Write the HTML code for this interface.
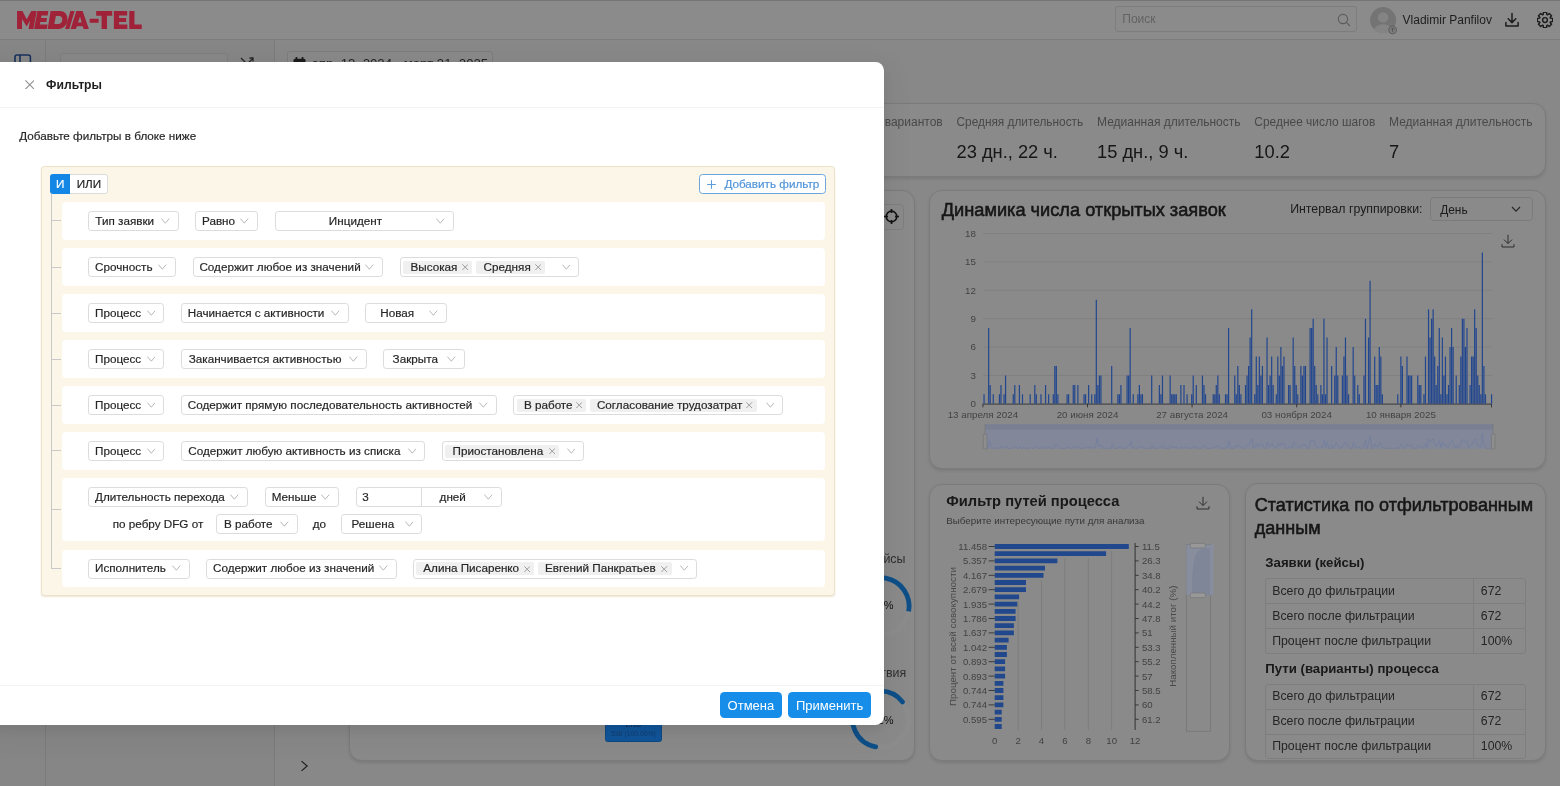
<!DOCTYPE html>
<html lang="ru">
<head>
<meta charset="utf-8">
<title>Фильтры</title>
<style>
*{box-sizing:border-box;margin:0;padding:0}
html,body{width:1560px;height:786px;overflow:hidden}
body{font-family:"Liberation Sans",sans-serif;background:#f8f8f8;color:#222;position:relative}
.abs{position:absolute}
/* ---------- dashboard (behind mask) ---------- */
#dash{will-change:transform;position:absolute;left:0;top:0;width:1560px;height:786px;overflow:hidden}
#topbar{position:absolute;left:0;top:0;width:1560px;height:39.5px;background:#fefefe;border-bottom:1px solid #e2e2e2}
.vline{position:absolute;top:40px;width:1px;height:746px;background:#e0e0e0}
.card{position:absolute;background:#fcfcfc;border-radius:13px;border:1px solid #e0e0e0;box-shadow:0 1.5px 3.5px rgba(0,0,0,.11)}
.lbl{position:absolute;font-size:12.4px;color:#858585;white-space:nowrap}
.val{position:absolute;font-size:18.3px;color:#2b2b2b;white-space:nowrap}
.t{position:absolute;white-space:nowrap}
/* ---------- mask + modal ---------- */
#over{will-change:transform;position:absolute;left:0;top:0;width:1560px;height:786px;overflow:hidden}
#mask{position:absolute;left:0;top:0;width:1560px;height:786px;background:rgba(0,0,0,.45)}
#modal{position:absolute;left:-10px;top:61.7px;width:894.3px;height:663.3px;background:#fff;border-radius:0 8.5px 8.5px 0;box-shadow:0 5px 14px rgba(0,0,0,.08),0 9px 28px 8px rgba(0,0,0,.04)}
#modal .in{will-change:transform;position:absolute;left:10px;top:-61.7px;width:884px;height:724px}
.hr{position:absolute;left:0;width:884px;height:1.4px;background:#f3f3f3}
.mt{position:absolute;white-space:nowrap;font-size:11.7px;color:#262626;line-height:14px;-webkit-text-stroke-width:0.18px}

.sel{position:absolute;background:#fff;border:1px solid #dcdcdc;border-radius:3.2px}
.tag{position:absolute;height:13.1px;background:#f0f0f0;border-radius:2px}
.btn{position:absolute;top:692.2px;height:25.6px;background:#158de9;border-radius:4.5px;color:#fff;font-size:13px;line-height:27px;text-align:center;white-space:nowrap}
</style>
</head>
<body>
<div id="dash">
  <div id="topbar"></div>
  <div class="abs" style="left:0;top:40px;width:274px;height:746px;background:#f5f5f5"></div>
  <div class="vline" style="left:45px"></div>
  <div class="vline" style="left:274px"></div>
<div class="abs" style="left:0;top:0;width:1560px;height:1.2px;background:#d6d6d6"></div>
<div class="abs" style="left:1114.5px;top:6.3px;width:242px;height:25.6px;border:1px solid #e3e3e3;border-radius:3px;background:#fdfdfd"></div>
<div class="t" style="left:1122.3px;top:12.8px;font-size:12px;color:#b5b5b5;line-height:13px">Поиск</div>
<svg class="abs" style="left:1336.5px;top:12.6px" width="14" height="14" viewBox="0 0 14 14"><circle cx="6" cy="6" r="4.6" fill="none" stroke="#a5a5a5" stroke-width="1.1"/><path d="M9.4 9.4 L12.6 12.6" stroke="#a5a5a5" stroke-width="1.2" stroke-linecap="round"/></svg>
<svg class="abs" style="left:1369px;top:5.5px" width="30" height="30" viewBox="0 0 30 30"><defs><clipPath id="avc"><circle cx="14.1" cy="14.1" r="13"/></clipPath></defs><circle cx="14.1" cy="14.1" r="13" fill="#d4d4d4"/><g clip-path="url(#avc)"><circle cx="14.1" cy="11.4" r="5.2" fill="#f1f1f1"/><ellipse cx="14.1" cy="25.5" rx="9.6" ry="7.2" fill="#f1f1f1"/></g><circle cx="23.6" cy="24" r="3.9" fill="#e6e6e6" stroke="#9a9a9a" stroke-width="0.8"/><path d="M23.6 26.2 V22 M21.9 23.6 L23.6 21.9 L25.3 23.6" fill="none" stroke="#8a8a8a" stroke-width="0.8"/></svg>
<div class="t" style="left:1402.6px;top:13.2px;font-size:12px;color:#3a3a3a;line-height:14px">Vladimir Panfilov</div>
<svg class="abs" style="left:1504px;top:11.5px" width="16" height="16" viewBox="0 0 16 16"><path d="M8 1.6 V10.4 M4.2 6.8 L8 10.6 L11.8 6.8 M1.9 10.6 V14.1 H14.1 V10.6" fill="none" stroke="#333" stroke-width="1.5" stroke-linecap="round" stroke-linejoin="round"/></svg>
<svg class="abs" style="left:1537px;top:11.6px" width="16" height="16" viewBox="0 0 16 16"><path d="M15.64 6.45 L15.64 9.55 L13.39 9.85 L13.12 10.51 L14.50 12.31 L12.31 14.50 L10.51 13.12 L9.85 13.39 L9.55 15.64 L6.45 15.64 L6.15 13.39 L5.49 13.12 L3.69 14.50 L1.50 12.31 L2.88 10.51 L2.61 9.85 L0.36 9.55 L0.36 6.45 L2.61 6.15 L2.88 5.49 L1.50 3.69 L3.69 1.50 L5.49 2.88 L6.15 2.61 L6.45 0.36 L9.55 0.36 L9.85 2.61 L10.51 2.88 L12.31 1.50 L14.50 3.69 L13.12 5.49 L13.39 6.15Z" fill="none" stroke="#333" stroke-width="1.45" stroke-linejoin="round"/><circle cx="8" cy="8" r="2.4" fill="none" stroke="#333" stroke-width="1.45"/></svg>
<svg class="abs" style="left:13.5px;top:53.5px" width="19" height="16" viewBox="0 0 19 16"><rect x="1" y="1" width="15.4" height="14" rx="2" fill="none" stroke="#2b5aa8" stroke-width="1.6"/><path d="M6 1 V15" stroke="#2b5aa8" stroke-width="1.6"/></svg>
<div class="abs" style="left:59.5px;top:52.5px;width:168.5px;height:24px;border:1px solid #e6e6e6;border-radius:3px;background:#f8f8f8"></div>
<svg class="abs" style="left:240px;top:57px" width="14" height="10" viewBox="0 0 14 10"><path d="M1 1 L7 7 M13 1.5 L7 7 M9.5 1 H13 V4.5" fill="none" stroke="#444" stroke-width="1.3"/></svg>
<div class="abs" style="left:286.5px;top:51px;width:206.5px;height:26px;border:1px solid #e2e2e2;border-radius:3px;background:#f9f9f9"></div>
<svg class="abs" style="left:292.5px;top:56.5px" width="13" height="13" viewBox="0 0 13 13"><rect x="0.5" y="1.8" width="12" height="10.5" rx="1.5" fill="#333"/><rect x="2.6" y="0" width="1.7" height="3.2" fill="#333"/><rect x="8.7" y="0" width="1.7" height="3.2" fill="#333"/></svg>
<div class="t" style="left:311.5px;top:56.1px;font-size:13.2px;color:#444;line-height:15px">апр. 13, 2024 - март 31, 2025</div>
<svg class="abs" style="left:300px;top:760px" width="9" height="12" viewBox="0 0 9 12"><path d="M1.5 1.2 L7.2 6 L1.5 10.8" fill="none" stroke="#333" stroke-width="1.1"/></svg>
<div class="card" style="left:349px;top:103px;width:1197px;height:73.6px"></div>
<div class="lbl" style="right:617.3px;top:114.8px;font-size:12px">вариантов</div>
<div class="lbl" style="left:956.5px;top:114.8px;font-size:11.85px">Средняя длительность</div>
<div class="val" style="left:956.5px;top:141.4px">23 дн., 22 ч.</div>
<div class="lbl" style="left:1097px;top:114.8px;font-size:12.03px">Медианная длительность</div>
<div class="val" style="left:1097px;top:141.4px">15 дн., 9 ч.</div>
<div class="lbl" style="left:1254.3px;top:114.8px;font-size:11.94px">Среднее число шагов</div>
<div class="val" style="left:1254.3px;top:141.4px">10.2</div>
<div class="lbl" style="left:1389px;top:114.8px;font-size:12.03px">Медианная длительность</div>
<div class="val" style="left:1389px;top:141.4px">7</div>
<div class="card" style="left:349px;top:189.5px;width:565.5px;height:571.5px"></div>
<div class="abs" style="left:878px;top:203.5px;width:26px;height:26px;border:1px solid #e6e6e6;border-radius:4px;background:#fcfcfc"></div>
<svg class="abs" style="left:883.3px;top:207.5px" width="17" height="17" viewBox="0 0 17 17"><circle cx="8.5" cy="8.5" r="5.3" fill="none" stroke="#222" stroke-width="1.7"/><path d="M8.5 1 V5 M8.5 12 V16 M1 8.5 H5 M12 8.5 H16" stroke="#222" stroke-width="1.7"/></svg>
<div class="t" style="left:871px;top:551.5px;font-size:12.4px;color:#555;line-height:15px">кейсы</div>
<div class="t" style="left:853px;top:666px;font-size:12.4px;color:#555;line-height:15px">действия</div>
<svg class="abs" style="left:840px;top:566px" width="80" height="200" viewBox="840 566 80 200"><circle cx="880.5" cy="606.3" r="28.6" fill="none" stroke="#ffffff" stroke-width="4.8"/><circle cx="880.5" cy="719.2" r="28" fill="none" stroke="#ffffff" stroke-width="4.8"/></svg>
<div class="t" style="left:865.3px;top:598px;font-size:11px;color:#1c1c1c;line-height:15px">100%</div>
<div class="t" style="left:871.4px;top:712.6px;font-size:11px;color:#1c1c1c;line-height:15px">72%</div><div class="card" style="left:928.5px;top:189.5px;width:617.5px;height:279px"></div>
<div class="t" style="left:941.8px;top:199.6px;font-size:18.2px;font-weight:400;color:#2a2a2a;line-height:20px;-webkit-text-stroke:0.55px #2a2a2a">Динамика числа открытых заявок</div>
<div class="t" style="left:1290.2px;top:202.4px;font-size:12.34px;color:#333;line-height:14px">Интервал группировки:</div>
<div class="abs" style="left:1430px;top:197.3px;width:102.6px;height:24.2px;border:1px solid #e0e0e0;border-radius:4px;background:#fcfcfc"></div>
<div class="t" style="left:1440.2px;top:202.6px;font-size:11.9px;color:#333;line-height:14px">День</div>
<svg class="abs" style="left:1511px;top:206px" width="10" height="7" viewBox="0 0 10 7"><path d="M1 1 L5 5.2 L9 1" fill="none" stroke="#444" stroke-width="1.1"/></svg>
<svg class="abs" style="left:1501px;top:234px" width="14" height="14" viewBox="0 0 14 14"><path d="M7 0.8 V9.4 M3 5.6 L7 9.6 L11 5.6 M1 10.2 V13 H13 V10.2" fill="none" stroke="#555" stroke-width="1" stroke-linejoin="miter"/></svg>
<svg class="abs" style="left:940px;top:225px" width="600" height="230" viewBox="940 225 600 230"><path d="M982.9 375.4 H1492.2" stroke="#e4e4e4" stroke-width="0.8"/><path d="M982.9 347.0 H1492.2" stroke="#e4e4e4" stroke-width="0.8"/><path d="M982.9 318.7 H1492.2" stroke="#e4e4e4" stroke-width="0.8"/><path d="M982.9 290.3 H1492.2" stroke="#e4e4e4" stroke-width="0.8"/><path d="M982.9 261.9 H1492.2" stroke="#e4e4e4" stroke-width="0.8"/><path d="M982.9 233.5 H1492.2" stroke="#e4e4e4" stroke-width="0.8"/><path d="M982.9 404.1 H1491.6" stroke="#555" stroke-width="0.9"/><path d="M982.9 403.8 v3.6" stroke="#555" stroke-width="0.9"/><path d="M1087.5 403.8 v3.6" stroke="#555" stroke-width="0.9"/><path d="M1192.1 403.8 v3.6" stroke="#555" stroke-width="0.9"/><path d="M1296.7 403.8 v3.6" stroke="#555" stroke-width="0.9"/><path d="M1400.9 403.8 v3.6" stroke="#555" stroke-width="0.9"/><path d="M1491.5 403.8 v3.6" stroke="#555" stroke-width="0.9"/><text x="976" y="407.2" font-size="9.8" fill="#7a7a7a" text-anchor="end" font-family="Liberation Sans">0</text><text x="976" y="378.8" font-size="9.8" fill="#7a7a7a" text-anchor="end" font-family="Liberation Sans">3</text><text x="976" y="350.4" font-size="9.8" fill="#7a7a7a" text-anchor="end" font-family="Liberation Sans">6</text><text x="976" y="322.1" font-size="9.8" fill="#7a7a7a" text-anchor="end" font-family="Liberation Sans">9</text><text x="976" y="293.7" font-size="9.8" fill="#7a7a7a" text-anchor="end" font-family="Liberation Sans">12</text><text x="976" y="265.3" font-size="9.8" fill="#7a7a7a" text-anchor="end" font-family="Liberation Sans">15</text><text x="976" y="236.9" font-size="9.8" fill="#7a7a7a" text-anchor="end" font-family="Liberation Sans">18</text><text x="982.9" y="418.2" font-size="9.8" fill="#7a7a7a" text-anchor="middle" font-family="Liberation Sans">13 апреля 2024</text><text x="1087.5" y="418.2" font-size="9.8" fill="#7a7a7a" text-anchor="middle" font-family="Liberation Sans">20 июня 2024</text><text x="1192.1" y="418.2" font-size="9.8" fill="#7a7a7a" text-anchor="middle" font-family="Liberation Sans">27 августа 2024</text><text x="1296.7" y="418.2" font-size="9.8" fill="#7a7a7a" text-anchor="middle" font-family="Liberation Sans">03 ноября 2024</text><text x="1400.9" y="418.2" font-size="9.8" fill="#7a7a7a" text-anchor="middle" font-family="Liberation Sans">10 января 2025</text></svg>
<div class="card" style="left:929px;top:484px;width:301px;height:277px"></div>
<div class="t" style="left:946.3px;top:492px;font-size:14.7px;font-weight:700;color:#2e2e2e;line-height:18px">Фильтр путей процесса</div>
<div class="t" style="left:946.3px;top:515.4px;font-size:9.8px;color:#666;line-height:12px">Выберите интересующие пути для анализа</div>
<svg class="abs" style="left:1195.6px;top:496px" width="14" height="14" viewBox="0 0 14 14"><path d="M7 0.8 V9.4 M3 5.6 L7 9.6 L11 5.6 M1 10.2 V13 H13 V10.2" fill="none" stroke="#555" stroke-width="1"/></svg>
<svg class="abs" style="left:935px;top:535px" width="290" height="222" viewBox="935 535 290 222"><path d="M1018.1 601.5 V730" stroke="#dcdcdc" stroke-width="0.8"/><path d="M1041.5 579.9 V730" stroke="#dcdcdc" stroke-width="0.8"/><path d="M1064.9 558.3 V730" stroke="#dcdcdc" stroke-width="0.8"/><path d="M1088.3 558.3 V730" stroke="#dcdcdc" stroke-width="0.8"/><path d="M1111.7 551.1 V730" stroke="#dcdcdc" stroke-width="0.8"/><path d="M1135.1 543 V730" stroke="#5a5a5a" stroke-width="1"/><path d="M988.6 546.5 H994.7" stroke="#5a5a5a" stroke-width="0.9"/><path d="M1135.1 546.5 h3.6" stroke="#5a5a5a" stroke-width="0.9"/><text x="987" y="549.9" font-size="9.6" fill="#787878" text-anchor="end" font-family="Liberation Sans">11.458</text><text x="1141.9" y="549.9" font-size="9.6" fill="#787878" font-family="Liberation Sans">11.5</text><path d="M988.6 560.9 H994.7" stroke="#5a5a5a" stroke-width="0.9"/><path d="M1135.1 560.9 h3.6" stroke="#5a5a5a" stroke-width="0.9"/><text x="987" y="564.3" font-size="9.6" fill="#787878" text-anchor="end" font-family="Liberation Sans">5.357</text><text x="1141.9" y="564.3" font-size="9.6" fill="#787878" font-family="Liberation Sans">26.3</text><path d="M988.6 575.3 H994.7" stroke="#5a5a5a" stroke-width="0.9"/><path d="M1135.1 575.3 h3.6" stroke="#5a5a5a" stroke-width="0.9"/><text x="987" y="578.7" font-size="9.6" fill="#787878" text-anchor="end" font-family="Liberation Sans">4.167</text><text x="1141.9" y="578.7" font-size="9.6" fill="#787878" font-family="Liberation Sans">34.8</text><path d="M988.6 589.7 H994.7" stroke="#5a5a5a" stroke-width="0.9"/><path d="M1135.1 589.7 h3.6" stroke="#5a5a5a" stroke-width="0.9"/><text x="987" y="593.1" font-size="9.6" fill="#787878" text-anchor="end" font-family="Liberation Sans">2.679</text><text x="1141.9" y="593.1" font-size="9.6" fill="#787878" font-family="Liberation Sans">40.2</text><path d="M988.6 604.1 H994.7" stroke="#5a5a5a" stroke-width="0.9"/><path d="M1135.1 604.1 h3.6" stroke="#5a5a5a" stroke-width="0.9"/><text x="987" y="607.5" font-size="9.6" fill="#787878" text-anchor="end" font-family="Liberation Sans">1.935</text><text x="1141.9" y="607.5" font-size="9.6" fill="#787878" font-family="Liberation Sans">44.2</text><path d="M988.6 618.5 H994.7" stroke="#5a5a5a" stroke-width="0.9"/><path d="M1135.1 618.5 h3.6" stroke="#5a5a5a" stroke-width="0.9"/><text x="987" y="621.9" font-size="9.6" fill="#787878" text-anchor="end" font-family="Liberation Sans">1.786</text><text x="1141.9" y="621.9" font-size="9.6" fill="#787878" font-family="Liberation Sans">47.8</text><path d="M988.6 632.9 H994.7" stroke="#5a5a5a" stroke-width="0.9"/><path d="M1135.1 632.9 h3.6" stroke="#5a5a5a" stroke-width="0.9"/><text x="987" y="636.3" font-size="9.6" fill="#787878" text-anchor="end" font-family="Liberation Sans">1.637</text><text x="1141.9" y="636.3" font-size="9.6" fill="#787878" font-family="Liberation Sans">51</text><path d="M988.6 647.3 H994.7" stroke="#5a5a5a" stroke-width="0.9"/><path d="M1135.1 647.3 h3.6" stroke="#5a5a5a" stroke-width="0.9"/><text x="987" y="650.7" font-size="9.6" fill="#787878" text-anchor="end" font-family="Liberation Sans">1.042</text><text x="1141.9" y="650.7" font-size="9.6" fill="#787878" font-family="Liberation Sans">53.3</text><path d="M988.6 661.7 H994.7" stroke="#5a5a5a" stroke-width="0.9"/><path d="M1135.1 661.7 h3.6" stroke="#5a5a5a" stroke-width="0.9"/><text x="987" y="665.1" font-size="9.6" fill="#787878" text-anchor="end" font-family="Liberation Sans">0.893</text><text x="1141.9" y="665.1" font-size="9.6" fill="#787878" font-family="Liberation Sans">55.2</text><path d="M988.6 676.1 H994.7" stroke="#5a5a5a" stroke-width="0.9"/><path d="M1135.1 676.1 h3.6" stroke="#5a5a5a" stroke-width="0.9"/><text x="987" y="679.5" font-size="9.6" fill="#787878" text-anchor="end" font-family="Liberation Sans">0.893</text><text x="1141.9" y="679.5" font-size="9.6" fill="#787878" font-family="Liberation Sans">57</text><path d="M988.6 690.5 H994.7" stroke="#5a5a5a" stroke-width="0.9"/><path d="M1135.1 690.5 h3.6" stroke="#5a5a5a" stroke-width="0.9"/><text x="987" y="693.9" font-size="9.6" fill="#787878" text-anchor="end" font-family="Liberation Sans">0.744</text><text x="1141.9" y="693.9" font-size="9.6" fill="#787878" font-family="Liberation Sans">58.5</text><path d="M988.6 704.9 H994.7" stroke="#5a5a5a" stroke-width="0.9"/><path d="M1135.1 704.9 h3.6" stroke="#5a5a5a" stroke-width="0.9"/><text x="987" y="708.3" font-size="9.6" fill="#787878" text-anchor="end" font-family="Liberation Sans">0.744</text><text x="1141.9" y="708.3" font-size="9.6" fill="#787878" font-family="Liberation Sans">60</text><path d="M988.6 719.3 H994.7" stroke="#5a5a5a" stroke-width="0.9"/><path d="M1135.1 719.3 h3.6" stroke="#5a5a5a" stroke-width="0.9"/><text x="987" y="722.7" font-size="9.6" fill="#787878" text-anchor="end" font-family="Liberation Sans">0.595</text><text x="1141.9" y="722.7" font-size="9.6" fill="#787878" font-family="Liberation Sans">61.2</text><text x="994.7" y="744.2" font-size="9.6" fill="#787878" text-anchor="middle" font-family="Liberation Sans">0</text><text x="1018.1" y="744.2" font-size="9.6" fill="#787878" text-anchor="middle" font-family="Liberation Sans">2</text><text x="1041.5" y="744.2" font-size="9.6" fill="#787878" text-anchor="middle" font-family="Liberation Sans">4</text><text x="1064.9" y="744.2" font-size="9.6" fill="#787878" text-anchor="middle" font-family="Liberation Sans">6</text><text x="1088.3" y="744.2" font-size="9.6" fill="#787878" text-anchor="middle" font-family="Liberation Sans">8</text><text x="1111.7" y="744.2" font-size="9.6" fill="#787878" text-anchor="middle" font-family="Liberation Sans">10</text><text x="1135.1" y="744.2" font-size="9.6" fill="#787878" text-anchor="middle" font-family="Liberation Sans">12</text><text transform="translate(956.2 636.6) rotate(-90)" font-size="9.8" fill="#858585" text-anchor="middle" font-family="Liberation Sans">Процент от всей совокупности</text><text transform="translate(1176 636.2) rotate(-90)" font-size="9.75" fill="#858585" text-anchor="middle" font-family="Liberation Sans">Накопленный итог (%)</text><rect x="1186.3" y="544.6" width="24" height="186.6" fill="none" stroke="#d0d0d0" stroke-width="0.7"/></svg>
<div class="card" style="left:1245px;top:483px;width:301.3px;height:278px"></div>
<div class="t" style="left:1254.8px;top:494px;font-size:18px;font-weight:400;color:#2a2a2a;line-height:23px;white-space:normal;width:292px;-webkit-text-stroke:0.55px #2a2a2a">Статистика по отфильтрованным данным</div>
<div class="t" style="left:1265.3px;top:555px;font-size:13.2px;font-weight:700;color:#2e2e2e;line-height:16px">Заявки (кейсы)</div>
<div class="abs" style="left:1265.3px;top:578.4px;width:261px;height:75.2px;border:1px solid #e6e6e6;border-radius:3px;background:#fcfcfc"></div>
<div class="abs" style="left:1473.4px;top:578.4px;width:1px;height:75.2px;background:#e6e6e6"></div>
<div class="t" style="left:1272.2px;top:584.0px;font-size:12.3px;color:#444;line-height:14px">Всего до фильтрации</div>
<div class="t" style="left:1480.8px;top:584.0px;font-size:12.3px;color:#444;line-height:14px">672</div>
<div class="abs" style="left:1265.3px;top:603.4px;width:261px;height:1px;background:#e6e6e6"></div>
<div class="t" style="left:1272.2px;top:609.0px;font-size:12.3px;color:#444;line-height:14px">Всего после фильтрации</div>
<div class="t" style="left:1480.8px;top:609.0px;font-size:12.3px;color:#444;line-height:14px">672</div>
<div class="abs" style="left:1265.3px;top:628.3px;width:261px;height:1px;background:#e6e6e6"></div>
<div class="t" style="left:1272.2px;top:633.9px;font-size:12.3px;color:#444;line-height:14px">Процент после фильтрации</div>
<div class="t" style="left:1480.8px;top:633.9px;font-size:12.3px;color:#444;line-height:14px">100%</div>
<div class="t" style="left:1265.3px;top:660.8px;font-size:13.2px;font-weight:700;color:#2e2e2e;line-height:16px">Пути (варианты) процесса</div>
<div class="abs" style="left:1265.3px;top:683.7px;width:261px;height:75.2px;border:1px solid #e6e6e6;border-radius:3px;background:#fcfcfc"></div>
<div class="abs" style="left:1473.4px;top:683.7px;width:1px;height:75.2px;background:#e6e6e6"></div>
<div class="t" style="left:1272.2px;top:689.3px;font-size:12.3px;color:#444;line-height:14px">Всего до фильтрации</div>
<div class="t" style="left:1480.8px;top:689.3px;font-size:12.3px;color:#444;line-height:14px">672</div>
<div class="abs" style="left:1265.3px;top:708.7px;width:261px;height:1px;background:#e6e6e6"></div>
<div class="t" style="left:1272.2px;top:714.3px;font-size:12.3px;color:#444;line-height:14px">Всего после фильтрации</div>
<div class="t" style="left:1480.8px;top:714.3px;font-size:12.3px;color:#444;line-height:14px">672</div>
<div class="abs" style="left:1265.3px;top:733.6px;width:261px;height:1px;background:#e6e6e6"></div>
<div class="t" style="left:1272.2px;top:739.2px;font-size:12.3px;color:#444;line-height:14px">Процент после фильтрации</div>
<div class="t" style="left:1480.8px;top:739.2px;font-size:12.3px;color:#444;line-height:14px">100%</div>
</div>
<div id="mask"></div>
<div id="over">
<svg class="abs" style="left:17.2px;top:10.8px" width="126" height="18.2" viewBox="0 0 126 18.2"><path d="M0 0H5.4L9.7 8.3L14.2 0H19.7L16.4 18H11.5L13 9.6L9.6 15.6L5 8V18H0ZM20.4 0H31.4L30.6 4.4H24.5L24 6.9H30L29.3 11H23.3L22.8 13.6H30.6L29.8 18H17.1ZM33.6 0H42.5C47.5 0 50.6 3.4 50.4 8.6C50.2 14 46.6 18 41.3 18H30.6ZM38.9 4.9L37.3 13.1H41C43.6 13.1 45.2 11.4 45.3 8.8C45.4 6.4 44.2 4.9 42 4.9ZM53.4 0H57.6L52.3 18H48.1ZM59.3 0H65.6L71.9 18H66.6L65.8 15.2H59.9L58.9 18H53.6ZM61 11.4H64.7L63 5.6ZM72.7 7.7H81.7V11.8H72.7ZM79.2 0H95.2V4.7H90V18H84.6V4.7H79.2ZM96.9 0H110.2V4.4H102.1V6.9H109.2V11H102.1V13.6H110.4V18H96.9ZM112.3 0H117.5V13.4H124.8V18H112.3Z" fill="#9f2239" fill-rule="evenodd"/></svg>
<svg class="abs" style="left:840px;top:566px" width="80" height="200" viewBox="840 566 80 200"><path d="M875.04 634.37 A28.6 28.6 0 1 1 908.64 611.41" fill="none" stroke="#0e4f88" stroke-width="4.8" stroke-linecap="butt"/><path d="M875.64 746.77 A28 28 0 1 1 902.56 701.96" fill="none" stroke="#0e4f88" stroke-width="4.8" stroke-linecap="round"/></svg>
<div class="abs" style="left:605px;top:716px;width:57px;height:26px;background:#10559a;border-radius:2.5px;border:1px solid #0e4880"></div>
<div class="t" style="left:605px;width:57px;top:721px;font-size:7.5px;font-weight:700;color:#12365f;text-align:center;line-height:8px">END</div>
<div class="t" style="left:605px;width:57px;top:730px;font-size:6.8px;color:#123c6e;text-align:center;line-height:8px">538 (100.00%)</div><svg class="abs" style="left:940px;top:225px" width="600" height="230" viewBox="940 225 600 230"><path d="M983.45 403.8v-9.5h1.2v9.5zM988.06 403.8v-75.7h1.2v75.7zM989.60 403.8v-18.9h1.2v18.9zM992.68 403.8v-9.5h1.2v9.5zM998.83 403.8v-9.5h1.2v9.5zM1000.37 403.8v-18.9h1.2v18.9zM1003.44 403.8v-9.5h1.2v9.5zM1004.98 403.8v-28.4h1.2v28.4zM1012.67 403.8v-9.5h1.2v9.5zM1014.21 403.8v-18.9h1.2v18.9zM1018.82 403.8v-18.9h1.2v18.9zM1021.90 403.8v-9.5h1.2v9.5zM1029.59 403.8v-9.5h1.2v9.5zM1034.20 403.8v-18.9h1.2v18.9zM1035.74 403.8v-9.5h1.2v9.5zM1040.36 403.8v-9.5h1.2v9.5zM1044.97 403.8v-18.9h1.2v18.9zM1048.05 403.8v-9.5h1.2v9.5zM1052.66 403.8v-9.5h1.2v9.5zM1054.20 403.8v-37.8h1.2v37.8zM1055.74 403.8v-37.8h1.2v37.8zM1057.27 403.8v-9.5h1.2v9.5zM1066.50 403.8v-9.5h1.2v9.5zM1068.04 403.8v-9.5h1.2v9.5zM1072.65 403.8v-18.9h1.2v18.9zM1074.19 403.8v-18.9h1.2v18.9zM1077.27 403.8v-18.9h1.2v18.9zM1083.42 403.8v-9.5h1.2v9.5zM1084.96 403.8v-9.5h1.2v9.5zM1088.03 403.8v-18.9h1.2v18.9zM1091.11 403.8v-9.5h1.2v9.5zM1094.19 403.8v-9.5h1.2v9.5zM1095.72 403.8v-104.1h1.2v104.1zM1097.26 403.8v-18.9h1.2v18.9zM1098.80 403.8v-28.4h1.2v28.4zM1100.34 403.8v-28.4h1.2v28.4zM1111.10 403.8v-37.8h1.2v37.8zM1117.26 403.8v-9.5h1.2v9.5zM1118.79 403.8v-9.5h1.2v9.5zM1120.33 403.8v-18.9h1.2v18.9zM1126.48 403.8v-28.4h1.2v28.4zM1128.02 403.8v-28.4h1.2v28.4zM1129.56 403.8v-75.7h1.2v75.7zM1132.64 403.8v-9.5h1.2v9.5zM1137.25 403.8v-9.5h1.2v9.5zM1138.79 403.8v-18.9h1.2v18.9zM1140.33 403.8v-9.5h1.2v9.5zM1141.86 403.8v-9.5h1.2v9.5zM1151.09 403.8v-28.4h1.2v28.4zM1158.78 403.8v-18.9h1.2v18.9zM1160.32 403.8v-9.5h1.2v9.5zM1161.86 403.8v-28.4h1.2v28.4zM1169.55 403.8v-28.4h1.2v28.4zM1171.09 403.8v-9.5h1.2v9.5zM1172.62 403.8v-9.5h1.2v9.5zM1174.16 403.8v-9.5h1.2v9.5zM1175.70 403.8v-9.5h1.2v9.5zM1180.31 403.8v-18.9h1.2v18.9zM1183.39 403.8v-18.9h1.2v18.9zM1186.47 403.8v-9.5h1.2v9.5zM1191.08 403.8v-9.5h1.2v9.5zM1192.62 403.8v-28.4h1.2v28.4zM1195.69 403.8v-18.9h1.2v18.9zM1201.85 403.8v-28.4h1.2v28.4zM1203.38 403.8v-18.9h1.2v18.9zM1204.92 403.8v-9.5h1.2v9.5zM1212.61 403.8v-9.5h1.2v9.5zM1214.15 403.8v-9.5h1.2v9.5zM1215.69 403.8v-18.9h1.2v18.9zM1217.23 403.8v-28.4h1.2v28.4zM1218.76 403.8v-9.5h1.2v9.5zM1224.92 403.8v-9.5h1.2v9.5zM1226.45 403.8v-9.5h1.2v9.5zM1227.99 403.8v-75.7h1.2v75.7zM1234.14 403.8v-28.4h1.2v28.4zM1235.68 403.8v-9.5h1.2v9.5zM1237.22 403.8v-37.8h1.2v37.8zM1238.76 403.8v-18.9h1.2v18.9zM1240.30 403.8v-9.5h1.2v9.5zM1244.91 403.8v-18.9h1.2v18.9zM1246.45 403.8v-28.4h1.2v28.4zM1247.99 403.8v-37.8h1.2v37.8zM1249.52 403.8v-66.2h1.2v66.2zM1251.06 403.8v-94.6h1.2v94.6zM1254.14 403.8v-9.5h1.2v9.5zM1255.68 403.8v-47.3h1.2v47.3zM1257.21 403.8v-18.9h1.2v18.9zM1258.75 403.8v-47.3h1.2v47.3zM1260.29 403.8v-28.4h1.2v28.4zM1261.83 403.8v-37.8h1.2v37.8zM1266.44 403.8v-66.2h1.2v66.2zM1267.98 403.8v-18.9h1.2v18.9zM1269.52 403.8v-28.4h1.2v28.4zM1271.06 403.8v-47.3h1.2v47.3zM1272.59 403.8v-18.9h1.2v18.9zM1275.67 403.8v-9.5h1.2v9.5zM1277.21 403.8v-47.3h1.2v47.3zM1278.75 403.8v-28.4h1.2v28.4zM1280.28 403.8v-56.8h1.2v56.8zM1281.82 403.8v-37.8h1.2v37.8zM1283.36 403.8v-47.3h1.2v47.3zM1287.97 403.8v-18.9h1.2v18.9zM1289.51 403.8v-18.9h1.2v18.9zM1292.59 403.8v-66.2h1.2v66.2zM1294.13 403.8v-37.8h1.2v37.8zM1295.66 403.8v-18.9h1.2v18.9zM1297.20 403.8v-9.5h1.2v9.5zM1300.28 403.8v-37.8h1.2v37.8zM1301.82 403.8v-28.4h1.2v28.4zM1303.35 403.8v-37.8h1.2v37.8zM1304.89 403.8v-37.8h1.2v37.8zM1309.51 403.8v-75.7h1.2v75.7zM1311.04 403.8v-75.7h1.2v75.7zM1312.58 403.8v-85.1h1.2v85.1zM1314.12 403.8v-37.8h1.2v37.8zM1315.66 403.8v-18.9h1.2v18.9zM1317.20 403.8v-9.5h1.2v9.5zM1320.27 403.8v-18.9h1.2v18.9zM1321.81 403.8v-9.5h1.2v9.5zM1323.35 403.8v-85.1h1.2v85.1zM1324.89 403.8v-9.5h1.2v9.5zM1326.42 403.8v-66.2h1.2v66.2zM1331.04 403.8v-37.8h1.2v37.8zM1334.11 403.8v-28.4h1.2v28.4zM1335.65 403.8v-56.8h1.2v56.8zM1337.19 403.8v-28.4h1.2v28.4zM1341.80 403.8v-28.4h1.2v28.4zM1343.34 403.8v-47.3h1.2v47.3zM1344.88 403.8v-66.2h1.2v66.2zM1346.42 403.8v-28.4h1.2v28.4zM1347.96 403.8v-9.5h1.2v9.5zM1352.57 403.8v-56.8h1.2v56.8zM1354.11 403.8v-28.4h1.2v28.4zM1357.18 403.8v-18.9h1.2v18.9zM1358.72 403.8v-9.5h1.2v9.5zM1363.34 403.8v-28.4h1.2v28.4zM1364.87 403.8v-85.1h1.2v85.1zM1367.95 403.8v-66.2h1.2v66.2zM1369.49 403.8v-123.0h1.2v123.0zM1374.10 403.8v-47.3h1.2v47.3zM1375.64 403.8v-18.9h1.2v18.9zM1377.18 403.8v-18.9h1.2v18.9zM1378.72 403.8v-56.8h1.2v56.8zM1380.25 403.8v-47.3h1.2v47.3zM1381.79 403.8v-9.5h1.2v9.5zM1397.17 403.8v-9.5h1.2v9.5zM1400.25 403.8v-47.3h1.2v47.3zM1401.79 403.8v-37.8h1.2v37.8zM1406.40 403.8v-47.3h1.2v47.3zM1407.94 403.8v-28.4h1.2v28.4zM1409.48 403.8v-28.4h1.2v28.4zM1411.01 403.8v-28.4h1.2v28.4zM1417.17 403.8v-28.4h1.2v28.4zM1418.70 403.8v-18.9h1.2v18.9zM1420.24 403.8v-18.9h1.2v18.9zM1423.32 403.8v-9.5h1.2v9.5zM1424.86 403.8v-47.3h1.2v47.3zM1427.93 403.8v-94.6h1.2v94.6zM1429.47 403.8v-66.2h1.2v66.2zM1431.01 403.8v-85.1h1.2v85.1zM1432.55 403.8v-94.6h1.2v94.6zM1434.08 403.8v-47.3h1.2v47.3zM1435.62 403.8v-18.9h1.2v18.9zM1437.16 403.8v-37.8h1.2v37.8zM1438.70 403.8v-75.7h1.2v75.7zM1440.24 403.8v-9.5h1.2v9.5zM1441.77 403.8v-66.2h1.2v66.2zM1443.31 403.8v-28.4h1.2v28.4zM1444.85 403.8v-47.3h1.2v47.3zM1446.39 403.8v-9.5h1.2v9.5zM1447.93 403.8v-18.9h1.2v18.9zM1449.46 403.8v-56.8h1.2v56.8zM1451.00 403.8v-75.7h1.2v75.7zM1452.54 403.8v-56.8h1.2v56.8zM1455.62 403.8v-28.4h1.2v28.4zM1458.69 403.8v-18.9h1.2v18.9zM1460.23 403.8v-47.3h1.2v47.3zM1461.77 403.8v-85.1h1.2v85.1zM1463.31 403.8v-85.1h1.2v85.1zM1464.84 403.8v-56.8h1.2v56.8zM1466.38 403.8v-75.7h1.2v75.7zM1469.46 403.8v-18.9h1.2v18.9zM1471.00 403.8v-47.3h1.2v47.3zM1472.53 403.8v-47.3h1.2v47.3zM1474.07 403.8v-94.6h1.2v94.6zM1475.61 403.8v-75.7h1.2v75.7zM1477.15 403.8v-28.4h1.2v28.4zM1478.69 403.8v-18.9h1.2v18.9zM1480.22 403.8v-9.5h1.2v9.5zM1481.76 403.8v-151.4h1.2v151.4zM1483.30 403.8v-37.8h1.2v37.8zM1484.84 403.8v-9.5h1.2v9.5zM1490.99 403.8v-9.5h1.2v9.5z" fill="#23478f"/><rect x="985" y="424.2" width="508" height="24.6" fill="#82889a"/><rect x="985" y="424.2" width="508" height="5.4" fill="#7a8092"/><polyline points="985.0,447.4 986.5,448.4 988.1,448.4 989.6,440.8 991.1,446.5 992.7,448.4 994.2,447.4 995.7,448.4 997.3,448.4 998.8,448.4 1000.4,447.4 1001.9,446.5 1003.4,448.4 1005.0,447.4 1006.5,445.5 1008.0,448.4 1009.6,448.4 1011.1,448.4 1012.6,448.4 1014.2,447.4 1015.7,446.5 1017.2,448.4 1018.8,448.4 1020.3,446.5 1021.8,448.4 1023.4,447.4 1024.9,448.4 1026.4,448.4 1028.0,448.4 1029.5,448.4 1031.0,447.4 1032.6,448.4 1034.1,448.4 1035.7,446.5 1037.2,447.4 1038.7,448.4 1040.3,448.4 1041.8,447.4 1043.3,448.4 1044.9,448.4 1046.4,446.5 1047.9,448.4 1049.5,447.4 1051.0,448.4 1052.5,448.4 1054.1,447.4 1055.6,444.6 1057.1,444.6 1058.7,447.4 1060.2,448.4 1061.8,448.4 1063.3,448.4 1064.8,448.4 1066.4,448.4 1067.9,447.4 1069.4,447.4 1071.0,448.4 1072.5,448.4 1074.0,446.5 1075.6,446.5 1077.1,448.4 1078.6,446.5 1080.2,448.4 1081.7,448.4 1083.2,448.4 1084.8,447.4 1086.3,447.4 1087.8,448.4 1089.4,446.5 1090.9,448.4 1092.5,447.4 1094.0,448.4 1095.5,447.4 1097.1,437.9 1098.6,446.5 1100.1,445.5 1101.7,445.5 1103.2,448.4 1104.7,448.4 1106.3,448.4 1107.8,448.4 1109.3,448.4 1110.9,448.4 1112.4,444.6 1113.9,448.4 1115.5,448.4 1117.0,448.4 1118.5,447.4 1120.1,447.4 1121.6,446.5 1123.2,448.4 1124.7,448.4 1126.2,448.4 1127.8,445.5 1129.3,445.5 1130.8,440.8 1132.4,448.4 1133.9,447.4 1135.4,448.4 1137.0,448.4 1138.5,447.4 1140.0,446.5 1141.6,447.4 1143.1,447.4 1144.6,448.4 1146.2,448.4 1147.7,448.4 1149.2,448.4 1150.8,448.4 1152.3,445.5 1153.8,448.4 1155.4,448.4 1156.9,448.4 1158.5,448.4 1160.0,446.5 1161.5,447.4 1163.1,445.5 1164.6,448.4 1166.1,448.4 1167.7,448.4 1169.2,448.4 1170.7,445.5 1172.3,447.4 1173.8,447.4 1175.3,447.4 1176.9,447.4 1178.4,448.4 1179.9,448.4 1181.5,446.5 1183.0,448.4 1184.5,446.5 1186.1,448.4 1187.6,447.4 1189.2,448.4 1190.7,448.4 1192.2,447.4 1193.8,445.5 1195.3,448.4 1196.8,446.5 1198.4,448.4 1199.9,448.4 1201.4,448.4 1203.0,445.5 1204.5,446.5 1206.0,447.4 1207.6,448.4 1209.1,448.4 1210.6,448.4 1212.2,448.4 1213.7,447.4 1215.2,447.4 1216.8,446.5 1218.3,445.5 1219.9,447.4 1221.4,448.4 1222.9,448.4 1224.5,448.4 1226.0,447.4 1227.5,447.4 1229.1,440.8 1230.6,448.4 1232.1,448.4 1233.7,448.4 1235.2,445.5 1236.7,447.4 1238.3,444.6 1239.8,446.5 1241.3,447.4 1242.9,448.4 1244.4,448.4 1246.0,446.5 1247.5,445.5 1249.0,444.6 1250.6,441.8 1252.1,438.9 1253.6,448.4 1255.2,447.4 1256.7,443.6 1258.2,446.5 1259.8,443.6 1261.3,445.5 1262.8,444.6 1264.4,448.4 1265.9,448.4 1267.4,441.8 1269.0,446.5 1270.5,445.5 1272.0,443.6 1273.6,446.5 1275.1,448.4 1276.7,447.4 1278.2,443.6 1279.7,445.5 1281.3,442.7 1282.8,444.6 1284.3,443.6 1285.9,448.4 1287.4,448.4 1288.9,446.5 1290.5,446.5 1292.0,448.4 1293.5,441.8 1295.1,444.6 1296.6,446.5 1298.1,447.4 1299.7,448.4 1301.2,444.6 1302.7,445.5 1304.3,444.6 1305.8,444.6 1307.3,448.4 1308.9,448.4 1310.4,440.8 1312.0,440.8 1313.5,439.8 1315.0,444.6 1316.6,446.5 1318.1,447.4 1319.6,448.4 1321.2,446.5 1322.7,447.4 1324.2,439.8 1325.8,447.4 1327.3,441.8 1328.8,448.4 1330.4,448.4 1331.9,444.6 1333.4,448.4 1335.0,445.5 1336.5,442.7 1338.0,445.5 1339.6,448.4 1341.1,448.4 1342.7,445.5 1344.2,443.6 1345.7,441.8 1347.3,445.5 1348.8,447.4 1350.3,448.4 1351.9,448.4 1353.4,442.7 1354.9,445.5 1356.5,448.4 1358.0,446.5 1359.5,447.4 1361.1,448.4 1362.6,448.4 1364.1,445.5 1365.7,439.8 1367.2,448.4 1368.8,441.8 1370.3,436.0 1371.8,448.4 1373.4,448.4 1374.9,443.6 1376.4,446.5 1378.0,446.5 1379.5,442.7 1381.0,443.6 1382.6,447.4 1384.1,448.4 1385.6,448.4 1387.2,448.4 1388.7,448.4 1390.2,448.4 1391.8,448.4 1393.3,448.4 1394.8,448.4 1396.4,448.4 1397.9,447.4 1399.5,448.4 1401.0,443.6 1402.5,444.6 1404.1,448.4 1405.6,448.4 1407.1,443.6 1408.7,445.5 1410.2,445.5 1411.7,445.5 1413.3,448.4 1414.8,448.4 1416.3,448.4 1417.9,445.5 1419.4,446.5 1420.9,446.5 1422.5,448.4 1424.0,447.4 1425.5,443.6 1427.1,448.4 1428.6,438.9 1430.2,441.8 1431.7,439.8 1433.2,438.9 1434.8,443.6 1436.3,446.5 1437.8,444.6 1439.4,440.8 1440.9,447.4 1442.4,441.8 1444.0,445.5 1445.5,443.6 1447.0,447.4 1448.6,446.5 1450.1,442.7 1451.6,440.8 1453.2,442.7 1454.7,448.4 1456.2,445.5 1457.8,448.4 1459.3,446.5 1460.8,443.6 1462.4,439.8 1463.9,439.8 1465.5,442.7 1467.0,440.8 1468.5,448.4 1470.1,446.5 1471.6,443.6 1473.1,443.6 1474.7,438.9 1476.2,440.8 1477.7,445.5 1479.3,446.5 1480.8,447.4 1482.3,433.2 1483.9,444.6 1485.4,447.4 1486.9,448.4 1488.5,448.4 1490.0,448.4 1491.5,447.4" fill="none" stroke="#6f7c9e" stroke-width="0.7" opacity="0.95"/><rect x="983.3" y="434" width="3.6" height="15" rx="1" fill="#8e8e8e" stroke="#707070" stroke-width="0.6"/><rect x="1491.4" y="434" width="3.6" height="15" rx="1" fill="#8e8e8e" stroke="#707070" stroke-width="0.6"/><path d="M985 424.2 v10 M1493 424.2 v10" stroke="#727272" stroke-width="0.6"/></svg>
<svg class="abs" style="left:935px;top:535px" width="290" height="222" viewBox="935 535 290 222"><path d="M994.7 544.10h134.1v4.8h-134.1zM994.7 551.30h111.4v4.8h-111.4zM994.7 558.50h62.7v4.8h-62.7zM994.7 565.70h50.3v4.8h-50.3zM994.7 572.90h48.8v4.8h-48.8zM994.7 580.10h31.3v4.8h-31.3zM994.7 587.30h31.3v4.8h-31.3zM994.7 594.50h24.4v4.8h-24.4zM994.7 601.70h22.6v4.8h-22.6zM994.7 608.90h20.9v4.8h-20.9zM994.7 616.10h20.9v4.8h-20.9zM994.7 623.30h19.2v4.8h-19.2zM994.7 630.50h19.2v4.8h-19.2zM994.7 637.70h13.9v4.8h-13.9zM994.7 644.90h12.2v4.8h-12.2zM994.7 652.10h12.2v4.8h-12.2zM994.7 659.30h10.4v4.8h-10.4zM994.7 666.50h10.4v4.8h-10.4zM994.7 673.70h10.4v4.8h-10.4zM994.7 680.90h8.7v4.8h-8.7zM994.7 688.10h8.7v4.8h-8.7zM994.7 695.30h8.7v4.8h-8.7zM994.7 702.50h8.7v4.8h-8.7zM994.7 709.70h7.0v4.8h-7.0zM994.7 716.90h7.0v4.8h-7.0zM994.7 724.10h7.0v4.8h-7.0z" fill="#21488c"/><rect x="1186.3" y="544.6" width="27.2" height="50.6" fill="#888e9e"/><path d="M1192 595 C1192 560 1194 549 1205 548.5 L1210 548.5 V595 Z" fill="#7f8697"/><rect x="1190.3" y="543.4" width="15" height="4.6" rx="1.4" fill="#989898" stroke="#747474" stroke-width="0.6"/><rect x="1190.3" y="593" width="15" height="4.6" rx="1.4" fill="#989898" stroke="#747474" stroke-width="0.6"/></svg>
</div>
<div id="modal"><div class="in">
<svg class="abs" style="left:24.6px;top:79.9px" width="9.6" height="9.6" viewBox="0 0 9.6 9.6"><path d="M0.4 0.4 L9.2 9.2 M9.2 0.4 L0.4 9.2" stroke="#8e8e8e" stroke-width="1.05" fill="none"/></svg>
<div class="abs" style="left:46.1px;top:78.4px;font-size:12.2px;font-weight:700;color:#1f1f1f;white-space:nowrap;line-height:15px">Фильтры</div>
<div class="hr" style="top:106.7px"></div>
<div class="mt" style="left:19.3px;top:128.8px">Добавьте фильтры в блоке ниже</div>
<div class="abs" style="left:41px;top:165.5px;width:793.6px;height:430.4px;background:#fbf6e8;border:1px solid #ebe2c9;border-radius:3.5px;box-shadow:0 1px 1.5px rgba(180,160,100,.25)"></div>
<div class="abs" style="left:50px;top:174px;width:57.6px;height:20.2px;background:#fff;border:1px solid #dcdcdc;border-radius:3px"></div>
<div class="abs" style="left:50px;top:174px;width:20.4px;height:20.2px;background:#1487e6;border-radius:3px 0 0 3px"></div>
<div class="mt" style="left:50px;width:20.4px;top:177.2px;text-align:center;color:#fff">И</div>
<div class="mt" style="left:70.4px;width:37px;top:177.2px;text-align:center">ИЛИ</div>
<div class="abs" style="left:699.4px;top:174.3px;width:126.5px;height:19.6px;background:#fff;border:1px solid #6aa7dd;border-radius:3.5px"></div>
<svg class="abs" style="left:707.3px;top:179.5px" width="9" height="9" viewBox="0 0 9 9"><path d="M4.5 0.2 V8.8 M0.2 4.5 H8.8" stroke="#5a9bd9" stroke-width="1" fill="none"/></svg>
<div class="mt" style="left:724.4px;top:177.1px;color:#4f94d8">Добавить фильтр</div>
<div class="abs" style="left:51.3px;top:193.8px;width:1px;height:375.5px;background:#c9c9c9"></div>
<div class="abs" style="left:51.3px;top:220.4px;width:9.8px;height:1px;background:#c9c9c9"></div>
<div class="abs" style="left:62.2px;top:202.2px;width:763.3px;height:37.7px;background:#fff;border-radius:4px"></div>
<div class="abs" style="left:51.3px;top:266.6px;width:9.8px;height:1px;background:#c9c9c9"></div>
<div class="abs" style="left:62.2px;top:248.3px;width:763.3px;height:37.7px;background:#fff;border-radius:4px"></div>
<div class="abs" style="left:51.3px;top:312.6px;width:9.8px;height:1px;background:#c9c9c9"></div>
<div class="abs" style="left:62.2px;top:294.3px;width:763.3px;height:37.7px;background:#fff;border-radius:4px"></div>
<div class="abs" style="left:51.3px;top:358.6px;width:9.8px;height:1px;background:#c9c9c9"></div>
<div class="abs" style="left:62.2px;top:340.3px;width:763.3px;height:37.7px;background:#fff;border-radius:4px"></div>
<div class="abs" style="left:51.3px;top:404.5px;width:9.8px;height:1px;background:#c9c9c9"></div>
<div class="abs" style="left:62.2px;top:386.3px;width:763.3px;height:37.6px;background:#fff;border-radius:4px"></div>
<div class="abs" style="left:51.3px;top:450.3px;width:9.8px;height:1px;background:#c9c9c9"></div>
<div class="abs" style="left:62.2px;top:432.2px;width:763.3px;height:37.5px;background:#fff;border-radius:4px"></div>
<div class="abs" style="left:51.3px;top:509.1px;width:9.8px;height:1px;background:#c9c9c9"></div>
<div class="abs" style="left:62.2px;top:478.2px;width:763.3px;height:63px;background:#fff;border-radius:4px"></div>
<div class="abs" style="left:51.3px;top:567.9px;width:9.8px;height:1px;background:#c9c9c9"></div>
<div class="abs" style="left:62.2px;top:550.2px;width:763.3px;height:36.6px;background:#fff;border-radius:4px"></div>
<div class="sel" style="left:88.3px;top:211.0px;width:90.4px;height:20px"></div><div class="mt" style="left:95.0px;width:59.5px;top:213.7px;text-align:center">Тип заявки</div><svg class="abs" style="left:161.0px;top:217.8px" width="8.6" height="6" viewBox="0 0 8.6 6"><path d="M0.4 0.6 L4.3 5.2 L8.2 0.6" fill="none" stroke="#b3b3b3" stroke-width="0.95"/></svg>
<div class="sel" style="left:195.3px;top:211.0px;width:62.4px;height:20px"></div><div class="mt" style="left:202.0px;width:31.5px;top:213.7px;text-align:center">Равно</div><svg class="abs" style="left:240.0px;top:217.8px" width="8.6" height="6" viewBox="0 0 8.6 6"><path d="M0.4 0.6 L4.3 5.2 L8.2 0.6" fill="none" stroke="#b3b3b3" stroke-width="0.95"/></svg>
<div class="sel" style="left:274.7px;top:211.0px;width:179.0px;height:20px"></div><div class="mt" style="left:281.4px;width:148.1px;top:213.7px;text-align:center">Инцидент</div><svg class="abs" style="left:436.0px;top:217.8px" width="8.6" height="6" viewBox="0 0 8.6 6"><path d="M0.4 0.6 L4.3 5.2 L8.2 0.6" fill="none" stroke="#b3b3b3" stroke-width="0.95"/></svg>
<div class="sel" style="left:88.3px;top:257.0px;width:87.4px;height:20px"></div><div class="mt" style="left:95.0px;width:56.5px;top:259.7px;text-align:center">Срочность</div><svg class="abs" style="left:158.0px;top:263.8px" width="8.6" height="6" viewBox="0 0 8.6 6"><path d="M0.4 0.6 L4.3 5.2 L8.2 0.6" fill="none" stroke="#b3b3b3" stroke-width="0.95"/></svg>
<div class="sel" style="left:192.7px;top:257.0px;width:190.3px;height:20px"></div><div class="mt" style="left:199.4px;width:159.4px;top:259.7px;text-align:center">Содержит любое из значений</div><svg class="abs" style="left:365.3px;top:263.8px" width="8.6" height="6" viewBox="0 0 8.6 6"><path d="M0.4 0.6 L4.3 5.2 L8.2 0.6" fill="none" stroke="#b3b3b3" stroke-width="0.95"/></svg>
<div class="sel" style="left:400.1px;top:257.0px;width:179.2px;height:20px"></div><div class="tag" style="left:403.2px;top:260.7px;width:69.0px"></div><div class="mt" style="left:410.5px;top:259.8px">Высокая</div><svg class="abs" style="left:461.8px;top:264.0px" width="6.4" height="6.4" viewBox="0 0 6.4 6.4"><path d="M0.3 0.3 L6.1000000000000005 6.1000000000000005 M6.1000000000000005 0.3 L0.3 6.1000000000000005" fill="none" stroke="#8f8f8f" stroke-width="0.85"/></svg><div class="tag" style="left:476.3px;top:260.7px;width:68.9px"></div><div class="mt" style="left:483.6px;top:259.8px">Средняя</div><svg class="abs" style="left:534.8px;top:264.0px" width="6.4" height="6.4" viewBox="0 0 6.4 6.4"><path d="M0.3 0.3 L6.1000000000000005 6.1000000000000005 M6.1000000000000005 0.3 L0.3 6.1000000000000005" fill="none" stroke="#8f8f8f" stroke-width="0.85"/></svg><svg class="abs" style="left:561.6px;top:263.8px" width="8.6" height="6" viewBox="0 0 8.6 6"><path d="M0.4 0.6 L4.3 5.2 L8.2 0.6" fill="none" stroke="#b3b3b3" stroke-width="0.95"/></svg>
<div class="sel" style="left:88.3px;top:303.0px;width:76.0px;height:20px"></div><div class="mt" style="left:95.0px;width:45.1px;top:305.7px;text-align:center">Процесс</div><svg class="abs" style="left:146.6px;top:309.8px" width="8.6" height="6" viewBox="0 0 8.6 6"><path d="M0.4 0.6 L4.3 5.2 L8.2 0.6" fill="none" stroke="#b3b3b3" stroke-width="0.95"/></svg>
<div class="sel" style="left:181.0px;top:303.0px;width:167.7px;height:20px"></div><div class="mt" style="left:187.7px;width:136.8px;top:305.7px;text-align:center">Начинается с активности</div><svg class="abs" style="left:331.0px;top:309.8px" width="8.6" height="6" viewBox="0 0 8.6 6"><path d="M0.4 0.6 L4.3 5.2 L8.2 0.6" fill="none" stroke="#b3b3b3" stroke-width="0.95"/></svg>
<div class="sel" style="left:365.3px;top:303.0px;width:81.4px;height:20px"></div><div class="mt" style="left:372.0px;width:50.5px;top:305.7px;text-align:center">Новая</div><svg class="abs" style="left:429.0px;top:309.8px" width="8.6" height="6" viewBox="0 0 8.6 6"><path d="M0.4 0.6 L4.3 5.2 L8.2 0.6" fill="none" stroke="#b3b3b3" stroke-width="0.95"/></svg>
<div class="sel" style="left:88.3px;top:349.0px;width:76.0px;height:20px"></div><div class="mt" style="left:95.0px;width:45.1px;top:351.7px;text-align:center">Процесс</div><svg class="abs" style="left:146.6px;top:355.8px" width="8.6" height="6" viewBox="0 0 8.6 6"><path d="M0.4 0.6 L4.3 5.2 L8.2 0.6" fill="none" stroke="#b3b3b3" stroke-width="0.95"/></svg>
<div class="sel" style="left:181.0px;top:349.0px;width:185.7px;height:20px"></div><div class="mt" style="left:187.7px;width:154.8px;top:351.7px;text-align:center">Заканчивается активностью</div><svg class="abs" style="left:349.0px;top:355.8px" width="8.6" height="6" viewBox="0 0 8.6 6"><path d="M0.4 0.6 L4.3 5.2 L8.2 0.6" fill="none" stroke="#b3b3b3" stroke-width="0.95"/></svg>
<div class="sel" style="left:383.3px;top:349.0px;width:81.4px;height:20px"></div><div class="mt" style="left:390.0px;width:50.5px;top:351.7px;text-align:center">Закрыта</div><svg class="abs" style="left:447.0px;top:355.8px" width="8.6" height="6" viewBox="0 0 8.6 6"><path d="M0.4 0.6 L4.3 5.2 L8.2 0.6" fill="none" stroke="#b3b3b3" stroke-width="0.95"/></svg>
<div class="sel" style="left:88.3px;top:395.0px;width:76.0px;height:20px"></div><div class="mt" style="left:95.0px;width:45.1px;top:397.7px;text-align:center">Процесс</div><svg class="abs" style="left:146.6px;top:401.8px" width="8.6" height="6" viewBox="0 0 8.6 6"><path d="M0.4 0.6 L4.3 5.2 L8.2 0.6" fill="none" stroke="#b3b3b3" stroke-width="0.95"/></svg>
<div class="sel" style="left:181.0px;top:395.0px;width:315.7px;height:20px"></div><div class="mt" style="left:187.7px;width:284.8px;top:397.7px;text-align:center">Содержит прямую последовательность активностей</div><svg class="abs" style="left:479.0px;top:401.8px" width="8.6" height="6" viewBox="0 0 8.6 6"><path d="M0.4 0.6 L4.3 5.2 L8.2 0.6" fill="none" stroke="#b3b3b3" stroke-width="0.95"/></svg>
<div class="sel" style="left:513.3px;top:395.0px;width:270.0px;height:20px"></div><div class="tag" style="left:516.6px;top:398.7px;width:69.4px"></div><div class="mt" style="left:523.9px;top:397.8px">В работе</div><svg class="abs" style="left:575.6px;top:402.0px" width="6.4" height="6.4" viewBox="0 0 6.4 6.4"><path d="M0.3 0.3 L6.1000000000000005 6.1000000000000005 M6.1000000000000005 0.3 L0.3 6.1000000000000005" fill="none" stroke="#8f8f8f" stroke-width="0.85"/></svg><div class="tag" style="left:589.6px;top:398.7px;width:167.1px"></div><div class="mt" style="left:596.9px;top:397.8px">Согласование трудозатрат</div><svg class="abs" style="left:746.3px;top:402.0px" width="6.4" height="6.4" viewBox="0 0 6.4 6.4"><path d="M0.3 0.3 L6.1000000000000005 6.1000000000000005 M6.1000000000000005 0.3 L0.3 6.1000000000000005" fill="none" stroke="#8f8f8f" stroke-width="0.85"/></svg><svg class="abs" style="left:765.6px;top:401.8px" width="8.6" height="6" viewBox="0 0 8.6 6"><path d="M0.4 0.6 L4.3 5.2 L8.2 0.6" fill="none" stroke="#b3b3b3" stroke-width="0.95"/></svg>
<div class="sel" style="left:88.3px;top:441.0px;width:76.0px;height:20px"></div><div class="mt" style="left:95.0px;width:45.1px;top:443.7px;text-align:center">Процесс</div><svg class="abs" style="left:146.6px;top:447.8px" width="8.6" height="6" viewBox="0 0 8.6 6"><path d="M0.4 0.6 L4.3 5.2 L8.2 0.6" fill="none" stroke="#b3b3b3" stroke-width="0.95"/></svg>
<div class="sel" style="left:181.0px;top:441.0px;width:244.3px;height:20px"></div><div class="mt" style="left:187.7px;width:213.4px;top:443.7px;text-align:center">Содержит любую активность из списка</div><svg class="abs" style="left:407.6px;top:447.8px" width="8.6" height="6" viewBox="0 0 8.6 6"><path d="M0.4 0.6 L4.3 5.2 L8.2 0.6" fill="none" stroke="#b3b3b3" stroke-width="0.95"/></svg>
<div class="sel" style="left:442.0px;top:441.0px;width:142.4px;height:20px"></div><div class="tag" style="left:445.2px;top:444.7px;width:113.8px"></div><div class="mt" style="left:452.5px;top:443.8px">Приостановлена</div><svg class="abs" style="left:548.6px;top:448.0px" width="6.4" height="6.4" viewBox="0 0 6.4 6.4"><path d="M0.3 0.3 L6.1000000000000005 6.1000000000000005 M6.1000000000000005 0.3 L0.3 6.1000000000000005" fill="none" stroke="#8f8f8f" stroke-width="0.85"/></svg><svg class="abs" style="left:566.7px;top:447.8px" width="8.6" height="6" viewBox="0 0 8.6 6"><path d="M0.4 0.6 L4.3 5.2 L8.2 0.6" fill="none" stroke="#b3b3b3" stroke-width="0.95"/></svg>
<div class="sel" style="left:88.3px;top:487.0px;width:159.7px;height:20px"></div><div class="mt" style="left:95.0px;width:128.8px;top:489.7px;text-align:center">Длительность перехода</div><svg class="abs" style="left:230.3px;top:493.8px" width="8.6" height="6" viewBox="0 0 8.6 6"><path d="M0.4 0.6 L4.3 5.2 L8.2 0.6" fill="none" stroke="#b3b3b3" stroke-width="0.95"/></svg>
<div class="sel" style="left:265.0px;top:487.0px;width:73.7px;height:20px"></div><div class="mt" style="left:271.7px;width:42.8px;top:489.7px;text-align:center">Меньше</div><svg class="abs" style="left:321.0px;top:493.8px" width="8.6" height="6" viewBox="0 0 8.6 6"><path d="M0.4 0.6 L4.3 5.2 L8.2 0.6" fill="none" stroke="#b3b3b3" stroke-width="0.95"/></svg>
<div class="sel" style="left:355.7px;top:487.0px;width:146px;height:20px"></div>
<div class="abs" style="left:421.3px;top:487.0px;width:1px;height:20px;background:#dcdcdc"></div>
<div class="mt" style="left:362.3px;top:489.7px">3</div>
<div class="mt" style="left:428px;width:49.5px;top:489.7px;text-align:center">дней</div>
<svg class="abs" style="left:484.0px;top:493.8px" width="8.6" height="6" viewBox="0 0 8.6 6"><path d="M0.4 0.6 L4.3 5.2 L8.2 0.6" fill="none" stroke="#b3b3b3" stroke-width="0.95"/></svg>
<div class="mt" style="left:112.7px;top:516.5px">по ребру DFG от</div>
<div class="sel" style="left:216.3px;top:514.0px;width:81.4px;height:20px"></div><div class="mt" style="left:223.0px;width:50.5px;top:516.7px;text-align:center">В работе</div><svg class="abs" style="left:280.0px;top:520.8px" width="8.6" height="6" viewBox="0 0 8.6 6"><path d="M0.4 0.6 L4.3 5.2 L8.2 0.6" fill="none" stroke="#b3b3b3" stroke-width="0.95"/></svg>
<div class="mt" style="left:312.7px;top:516.5px">до</div>
<div class="sel" style="left:341.0px;top:514.0px;width:81.3px;height:20px"></div><div class="mt" style="left:347.7px;width:50.4px;top:516.7px;text-align:center">Решена</div><svg class="abs" style="left:404.6px;top:520.8px" width="8.6" height="6" viewBox="0 0 8.6 6"><path d="M0.4 0.6 L4.3 5.2 L8.2 0.6" fill="none" stroke="#b3b3b3" stroke-width="0.95"/></svg>
<div class="sel" style="left:88.3px;top:558.5px;width:101.4px;height:20px"></div><div class="mt" style="left:95.0px;width:70.5px;top:561.2px;text-align:center">Исполнитель</div><svg class="abs" style="left:172.0px;top:565.3px" width="8.6" height="6" viewBox="0 0 8.6 6"><path d="M0.4 0.6 L4.3 5.2 L8.2 0.6" fill="none" stroke="#b3b3b3" stroke-width="0.95"/></svg>
<div class="sel" style="left:206.3px;top:558.5px;width:190.4px;height:20px"></div><div class="mt" style="left:213.0px;width:159.5px;top:561.2px;text-align:center">Содержит любое из значений</div><svg class="abs" style="left:379.0px;top:565.3px" width="8.6" height="6" viewBox="0 0 8.6 6"><path d="M0.4 0.6 L4.3 5.2 L8.2 0.6" fill="none" stroke="#b3b3b3" stroke-width="0.95"/></svg>
<div class="sel" style="left:413.3px;top:558.5px;width:284.0px;height:20px"></div><div class="tag" style="left:416.0px;top:562.2px;width:118.0px"></div><div class="mt" style="left:423.3px;top:561.3px">Алина Писаренко</div><svg class="abs" style="left:523.6px;top:565.5px" width="6.4" height="6.4" viewBox="0 0 6.4 6.4"><path d="M0.3 0.3 L6.1000000000000005 6.1000000000000005 M6.1000000000000005 0.3 L0.3 6.1000000000000005" fill="none" stroke="#8f8f8f" stroke-width="0.85"/></svg><div class="tag" style="left:537.7px;top:562.2px;width:134.0px"></div><div class="mt" style="left:545.0px;top:561.3px">Евгений Панкратьев</div><svg class="abs" style="left:661.3px;top:565.5px" width="6.4" height="6.4" viewBox="0 0 6.4 6.4"><path d="M0.3 0.3 L6.1000000000000005 6.1000000000000005 M6.1000000000000005 0.3 L0.3 6.1000000000000005" fill="none" stroke="#8f8f8f" stroke-width="0.85"/></svg><svg class="abs" style="left:679.6px;top:565.3px" width="8.6" height="6" viewBox="0 0 8.6 6"><path d="M0.4 0.6 L4.3 5.2 L8.2 0.6" fill="none" stroke="#b3b3b3" stroke-width="0.95"/></svg>
<div class="hr" style="top:684.6px"></div>
<div class="btn" style="left:720px;width:61.8px">Отмена</div>
<div class="btn" style="left:788.3px;width:82.6px">Применить</div>
</div></div>
</body>
</html>
